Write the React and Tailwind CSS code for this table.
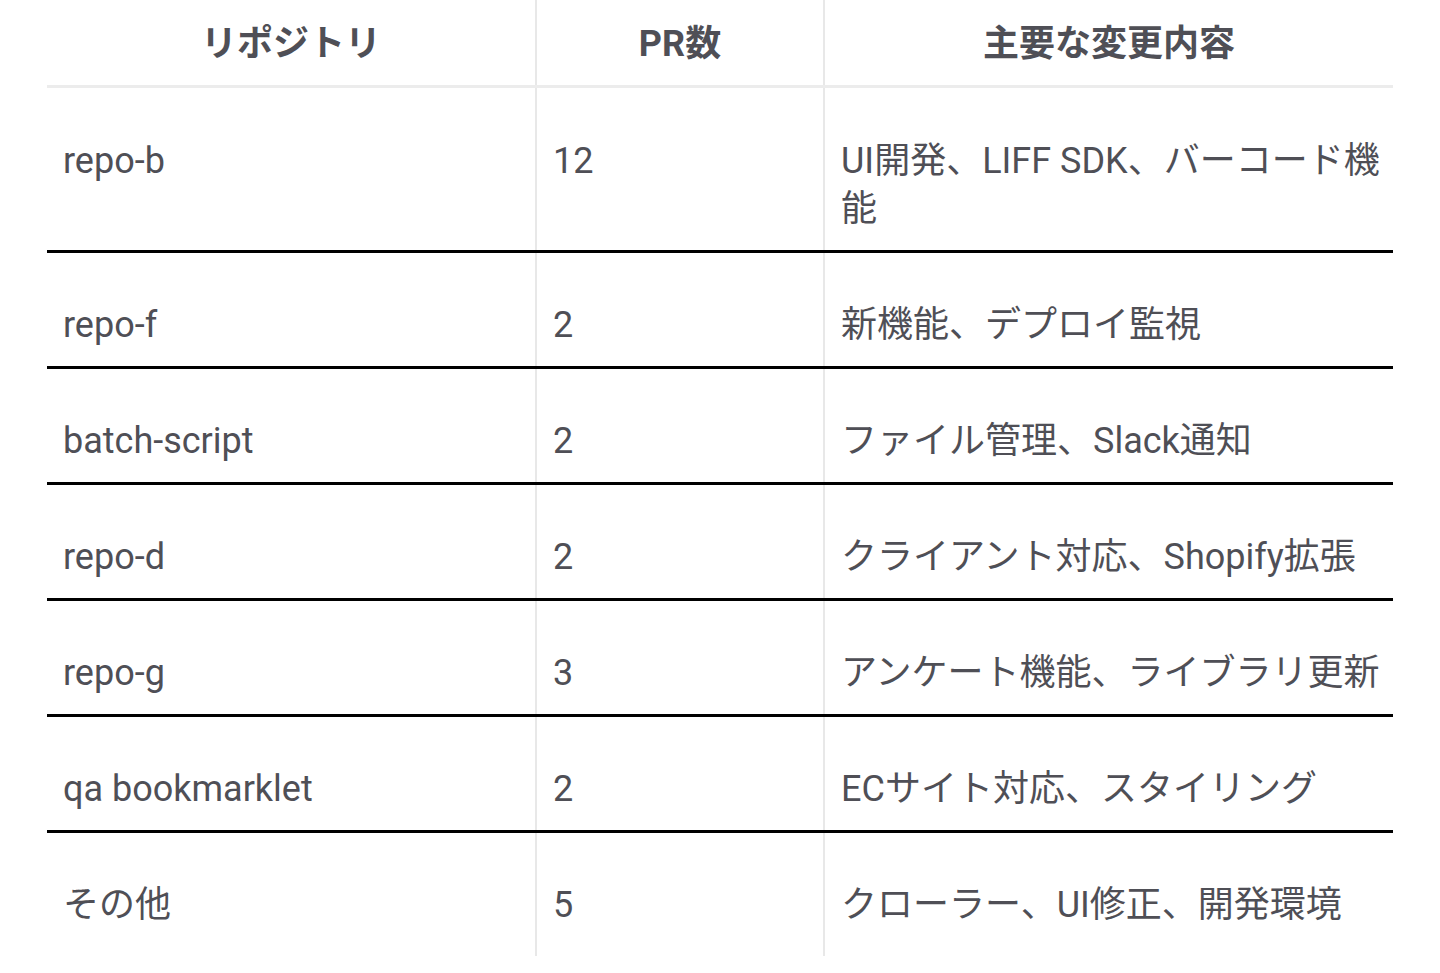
const rows = [
  { repo: 'repo-b', prs: '12', desc: 'UI開発、LIFF SDK、バーコード機能' },
  { repo: 'repo-f', prs: '2', desc: '新機能、デプロイ監視' },
  { repo: 'batch-script', prs: '2', desc: 'ファイル管理、Slack通知' },
  { repo: 'repo-d', prs: '2', desc: 'クライアント対応、Shopify拡張' },
  { repo: 'repo-g', prs: '3', desc: 'アンケート機能、ライブラリ更新' },
  { repo: 'qa bookmarklet', prs: '2', desc: 'ECサイト対応、スタイリング' },
  { repo: 'その他', prs: '5', desc: 'クローラー、UI修正、開発環境' },
]

export default function App() {
  return (
    <div
      className="min-h-screen bg-white text-[#4f4f56]"
      style={{ fontFamily: 'Roboto, "Noto Sans CJK JP", sans-serif' }}
    >
      <table className="ml-[47px] w-[1346px] border-collapse table-fixed text-[36px] leading-[48px]">
        <colgroup>
          <col className="w-[489px]" />
          <col className="w-[288px]" />
          <col className="w-[569px]" />
        </colgroup>
        <thead>
          <tr className="border-b-[3px] border-[#ececec]">
            <th className="pt-[20px] pb-[17px] px-4 font-bold text-center">リポジトリ</th>
            <th className="pt-[20px] pb-[17px] px-4 font-bold text-center border-l-2 border-[#e8e8e8]">PR数</th>
            <th className="pt-[20px] pb-[17px] px-4 font-bold text-center border-l-2 border-[#e8e8e8]">主要な変更内容</th>
          </tr>
        </thead>
        <tbody>
          {rows.map((r, i) => {
            const first = i === 0
            const last = i === rows.length - 1
            const pad = first
              ? 'pt-[49px] pb-[17px]'
              : last
                ? 'pt-[48px] pb-[27px]'
                : 'pt-[48px] pb-[17px]'
            return (
              <tr key={r.repo} className={last ? '' : 'border-b-[3px] border-black'}>
                <td className={`${pad} pl-4 pr-4 align-top`}>{r.repo}</td>
                <td className={`${pad} pl-4 pr-4 align-top border-l-2 border-[#e8e8e8]`}>{r.prs}</td>
                <td className={`${pad} pl-4 pr-2 align-top border-l-2 border-[#e8e8e8]`}>{r.desc}</td>
              </tr>
            )
          })}
        </tbody>
      </table>
    </div>
  )
}
